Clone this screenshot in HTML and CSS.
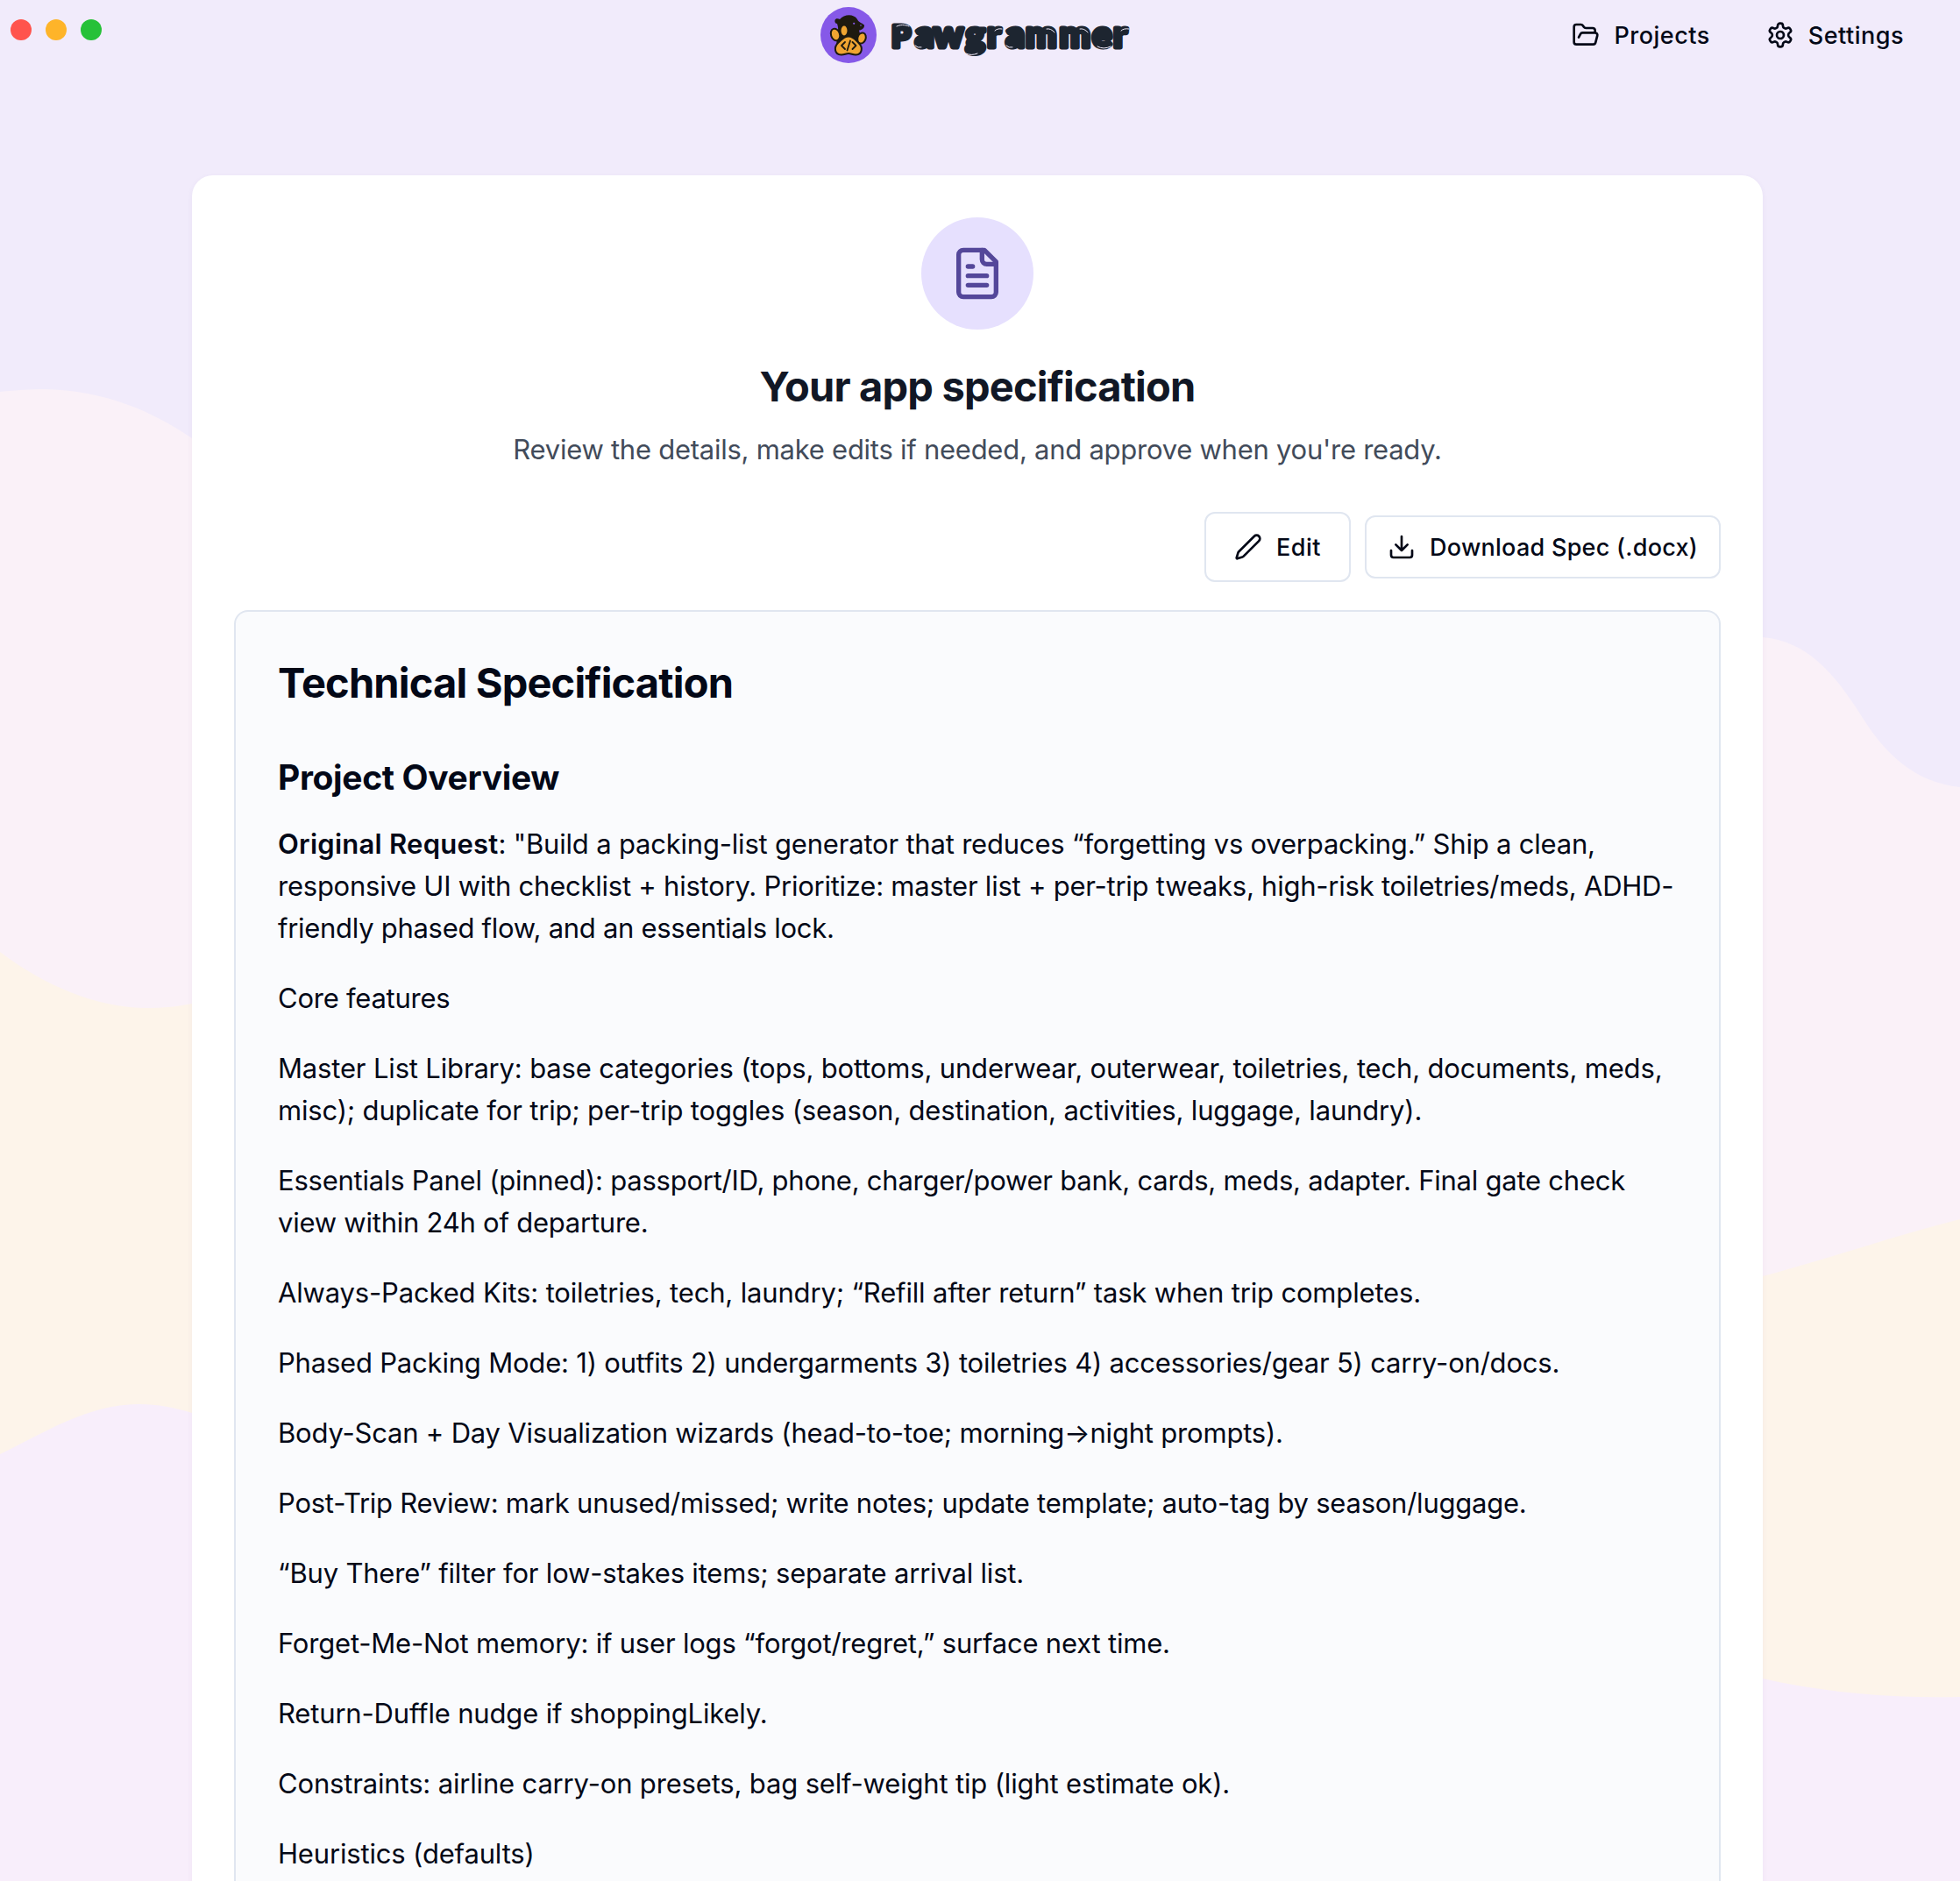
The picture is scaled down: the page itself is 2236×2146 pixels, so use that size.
FILE: index.html
```html
<!DOCTYPE html>
<html lang="en">
<head>
<meta charset="utf-8">
<title>Pawgrammer</title>
<link rel="stylesheet" href="styles.css">
</head>
<body>
<svg class="waves" viewBox="0 0 2236 2146" aria-hidden="true">
  <path class="wave-pink" d="M0 447C20 445 35 444 50 444C120 445 175 470 219 500L600 700H1900L2011 727C2060 732 2090 764 2123 816C2150 860 2185 893 2236 898V2146H0Z"/>
  <path class="wave-cream" d="M0 1086C50 1124 110 1150 167 1150C187 1150 205 1148 219 1145L2011 1456C2080 1438 2160 1410 2236 1391V2146H0Z"/>
  <path class="wave-lilac" d="M0 1659C50 1635 100 1602 158 1602C180 1602 200 1606 219 1612L2011 1915C2080 1931 2160 1938 2236 1936V2146H0Z"/>
</svg>
<header class="topbar">
  <div class="lights"><i class="light red"></i><i class="light amber"></i><i class="light green"></i></div>
  <div class="brand">
    <svg class="brand-mark" viewBox="0 0 64 64">
      <circle cx="32" cy="32" r="32" fill="#8659e8"/>
      <path fill="#1e1a10" d="M16.500 15C17 13 20 13 22 14C27 8 38 7.500 42 14C43 17 47 18 50 20.500C50.500 24 47 26.500 44 26.500L46 34L42 48L18 48L19 30C21 26 20 22 19 19C17 19 16 17 16.500 15Z"/>
      <circle cx="38.200" cy="18.800" r="1.100" fill="#8659e8"/><circle cx="46" cy="21" r=".8" fill="#8659e8"/>
      <g fill="#f0a531" stroke="#1e1a10" stroke-width="2">
        <ellipse cx="17" cy="31.500" rx="5" ry="7" transform="rotate(-18 17 31.500)"/>
        <ellipse cx="27" cy="27" rx="4.500" ry="6.500"/>
        <ellipse cx="47" cy="35.500" rx="4.600" ry="6.200" transform="rotate(20 47 35.500)"/>
        <path d="M32 33.500C38 33.500 40 38 43.500 41C49 46 47.500 54 40.500 54.500C37 54.700 35 53 32 53C29 53 27 54.700 23.500 54.500C16 54 15 46 20 41C24 38 26 33.500 32 33.500Z"/>
      </g>
      <path fill="none" stroke="#1e1a10" stroke-width="1.800" stroke-linecap="round" stroke-linejoin="round" d="M28 40L24 44L28 48M36.500 40L40.500 44L36.500 48M34 38.500L30.500 49.500"/>
    </svg>
    <svg class="brand-name" viewBox="0 0 276 64">
      <text y="45.500" x="3 30 51 87.500 112 133.500 156 194.500 232 256"><tspan class="brand-cap">P</tspan>awgrammer</text>
      <path class="shine" d="M9 22C13 20 18 20 23 22M30 44Q33 47 37 46M82 44Q84 42 84 40M88 53Q94 56 101 53M121 27Q124 24 129 25M134 44Q137 47 141 46M180 25Q185 24 189 29M218 25Q223 24 227 29M238 45Q245 49 253 45M265 27Q268 24 274 25"/>
    </svg>
  </div>
  <nav class="nav">
    <a class="nav-link"><svg class="icon" viewBox="0 0 24 24"><path d="m6 14 1.500-2.900A2 2 0 0 1 9.240 10H20a2 2 0 0 1 1.940 2.500l-1.540 6a2 2 0 0 1-1.950 1.500H4a2 2 0 0 1-2-2V5a2 2 0 0 1 2-2h3.900a2 2 0 0 1 1.690.9l.81 1.200a2 2 0 0 0 1.670.9H18a2 2 0 0 1 2 2v2"/></svg><span>Projects</span></a>
    <a class="nav-link"><svg class="icon" viewBox="0 0 24 24"><path d="M12.220 2h-.44a2 2 0 0 0-2 2v.18a2 2 0 0 1-1 1.730l-.43.25a2 2 0 0 1-2 0l-.15-.08a2 2 0 0 0-2.730.73l-.22.38a2 2 0 0 0 .73 2.730l.15.1a2 2 0 0 1 1 1.720v.51a2 2 0 0 1-1 1.740l-.15.09a2 2 0 0 0-.73 2.730l.22.38a2 2 0 0 0 2.730.73l.15-.08a2 2 0 0 1 2 0l.43.25a2 2 0 0 1 1 1.730V20a2 2 0 0 0 2 2h.44a2 2 0 0 0 2-2v-.18a2 2 0 0 1 1-1.730l.43-.25a2 2 0 0 1 2 0l.15.08a2 2 0 0 0 2.730-.73l.22-.39a2 2 0 0 0-.73-2.730l-.15-.08a2 2 0 0 1-1-1.740v-.5a2 2 0 0 1 1-1.740l.15-.09a2 2 0 0 0 .73-2.730l-.22-.38a2 2 0 0 0-2.730-.73l-.15.08a2 2 0 0 1-2 0l-.43-.25a2 2 0 0 1-1-1.730V4a2 2 0 0 0-2-2z"/><circle cx="12" cy="12" r="3"/></svg><span>Settings</span></a>
  </nav>
</header>
<main class="card">
  <div class="badge"><svg class="icon badge-icon" viewBox="0 0 24 24"><path d="M15 2H6a2 2 0 0 0-2 2v16a2 2 0 0 0 2 2h12a2 2 0 0 0 2-2V7Z"/><path d="M14 2v4a2 2 0 0 0 2 2h4M10 9H8M16 13H8M16 17H8"/></svg></div>
  <h1 class="title">Your app specification</h1>
  <p class="subtitle">Review the details, make edits if needed, and approve when you're ready.</p>
  <div class="actions">
    <button class="btn btn-edit"><svg class="icon" viewBox="0 0 24 24"><path d="M21.174 6.812a1 1 0 0 0-3.986-3.987L3.842 16.174a2 2 0 0 0-.5.830l-1.321 4.352a.5.500 0 0 0 .623.622l4.353-1.320a2 2 0 0 0 .83-.497z"/></svg><span>Edit</span></button>
    <button class="btn btn-download"><svg class="icon" viewBox="0 0 24 24"><path d="M21 15v4a2 2 0 0 1-2 2H5a2 2 0 0 1-2-2v-4M7 10l5 5 5-5M12 15V3"/></svg><span>Download Spec (.docx)</span></button>
  </div>
  <article class="spec">
    <h2 class="spec-title">Technical Specification</h2>
    <h3 class="spec-heading">Project Overview</h3>
    <p><strong>Original Request</strong>: "Build a packing-list generator that reduces “forgetting vs overpacking.” Ship a clean,<br><span class="tight">responsive UI with checklist + history. Prioritize: master list + per-trip tweaks, high-risk toiletries/meds, ADHD-</span><br><span class="tighter">friendly phased flow, and an essentials lock.</span></p>
    <p class="tight">Core features</p>
    <p class="loose">Master List Library: base categories (tops, bottoms, underwear, outerwear, toiletries, tech, documents, meds,<br>misc); duplicate for trip; per-trip toggles (season, destination, activities, luggage, laundry).</p>
    <p class="tight">Essentials Panel (pinned): passport/ID, phone, charger/power bank, cards, meds, adapter. Final gate check<br>view within 24h of departure.</p>
    <p class="loose">Always-Packed Kits: toiletries, tech, laundry; “Refill after return” task when trip completes.</p>
    <p>Phased Packing Mode: 1) outfits 2) undergarments 3) toiletries 4) accessories/gear 5) carry-on/docs.</p>
    <p>Body-Scan + Day Visualization wizards (head-to-toe; morning→night prompts).</p>
    <p class="tight">Post-Trip Review: mark unused/missed; write notes; update template; auto-tag by season/luggage.</p>
    <p>“Buy There” filter for low-stakes items; separate arrival list.</p>
    <p>Forget-Me-Not memory: if user logs “forgot/regret,” surface next time.</p>
    <p class="loose">Return-Duffle nudge if shoppingLikely.</p>
    <p class="loose">Constraints: airline carry-on presets, bag self-weight tip (light estimate ok).</p>
    <p class="loose">Heuristics (defaults)</p>
  </article>
</main>
</body>
</html>
```
FILE: styles.css
```css
* { box-sizing: border-box; }
body {
  margin: 0;
  width: 2236px;
  height: 2146px;
  overflow: hidden;
  position: relative;
  display: flex;
  flex-direction: column;
  background: #f1ebfb;
  color: #030817;
  font-family: Inter, "Liberation Sans", sans-serif;
  font-size: 31px;
}
.waves { position: absolute; inset: 0; width: 2236px; height: 2146px; z-index: -1; }
.wave-pink { fill: #faf1f8; }
.wave-cream { fill: #fdf4ea; }
.wave-lilac { fill: #f8eefb; }
.topbar {
  display: grid;
  grid-template-columns: 924px auto 1fr;
  align-items: start;
  height: 80px;
  padding: 0 64px 0 12px;
  flex: none;
}
.lights { display: flex; gap: 16px; padding-top: 22px; }
.light { width: 24px; height: 24px; border-radius: 50%; }
.red { background: #ff544d; }
.amber { background: #feb429; }
.green { background: #26c138; }
.brand { display: flex; gap: 14px; padding-top: 8px; }
.brand-mark { width: 64px; height: 64px; }
.brand-name { width: 276px; height: 64px; overflow: visible; }
.brand-name text {
  font: 900 42px Lato, sans-serif;
  fill: #1d2530; stroke: #1d2530; stroke-width: 5px; stroke-linejoin: round;
}
.brand-name .brand-cap { font-size: 35px; }
.shine { fill: none; stroke: #f1ebfb; stroke-width: 1px; stroke-linecap: round; }
.nav { display: flex; justify-content: flex-end; gap: 64px; }
.nav-link {
  display: flex; align-items: center; gap: 16px; height: 80px;
  font-size: 27px; font-weight: 500; letter-spacing: .5px;
}
.icon {
  width: 32px; height: 32px; flex: none;
  fill: none; stroke: currentColor; stroke-width: 2; stroke-linecap: round; stroke-linejoin: round;
}
.card {
  display: flex;
  flex-direction: column;
  flex: 1;
  width: 1792px;
  margin: 120px 0 0 219px;
  padding: 48px 48px 0;
  border-radius: 24px 24px 0 0;
  background: #fff;
  box-shadow: 0 2px 6px rgba(80, 60, 140, .06);
}
.badge {
  display: flex; align-items: center; justify-content: center;
  width: 128px; height: 128px; margin: 0 auto;
  border-radius: 50%; background: #e6e0fe; color: #54479a;
}
.badge-icon { width: 64px; height: 64px; }
.title {
  margin: 32px 0 0; text-align: center;
  font-size: 47px; line-height: 66px; font-weight: 650; letter-spacing: -.82px; color: #111725;
}
.subtitle { margin: 15px 0 0; text-align: center; line-height: 48px; letter-spacing: -.257px; color: #424b5a; }
.actions { display: flex; justify-content: flex-end; align-items: center; gap: 16px; margin-top: 47px; }
.btn {
  display: flex; align-items: center; gap: 16px;
  border: 2px solid #e0e6f0; border-radius: 12px;
  background: #fff; color: inherit;
  font: 500 27px Inter, sans-serif; letter-spacing: .26px; white-space: nowrap;
}
.btn-edit { height: 80px; padding: 0 32px; letter-spacing: .5px; }
.btn-download { height: 72px; padding: 0 24px; }
.spec {
  flex: 1;
  min-height: 0;
  overflow: hidden;
  margin-top: 32px;
  padding: 48px 48px 0;
  border: 2px solid #e0e6f0;
  border-bottom: 0;
  border-radius: 16px 16px 0 0;
  background: #fafbfd;
}
.spec-title { margin: 0; font-size: 47px; line-height: 66px; font-weight: 650; letter-spacing: -.82px; }
.spec-heading { margin: 47px 0 0; font-size: 39px; line-height: 56px; font-weight: 650; letter-spacing: -.35px; }
.spec p { margin: 0 0 32px; line-height: 48px; letter-spacing: -.2px; white-space: nowrap; }
.spec-heading + p { margin-top: 24px; }
.spec strong { font-weight: 600; letter-spacing: .25px; }
.spec .loose { letter-spacing: -.165px; }
.spec .tight { letter-spacing: -.238px; }
.spec .tighter { letter-spacing: -.285px; }
```
